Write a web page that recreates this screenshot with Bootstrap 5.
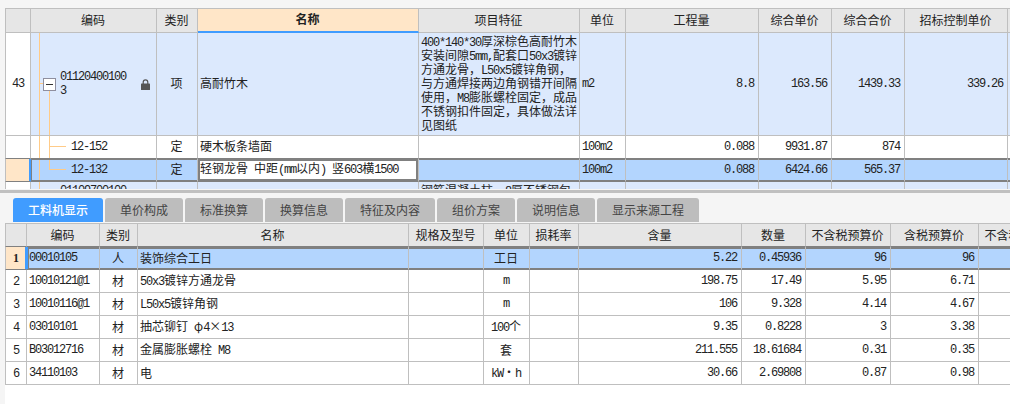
<!DOCTYPE html>
<html lang="zh">
<head>
<meta charset="utf-8">
<title>工料机显示</title>
<link href="https://cdn.jsdelivr.net/npm/bootstrap@5.3.0/dist/css/bootstrap.min.css" rel="stylesheet">
<style>
html,body{height:100%;overflow:hidden}
body{background:#f5f5f5;color:#222;font:12px/14px "Noto Sans CJK SC","Liberation Sans",sans-serif}
.lt{font-family:"Liberation Mono",monospace;letter-spacing:-1.2px;white-space:pre}
.top-pane{height:181px;margin:8px 0 1px 5px;overflow:hidden;background:#fff}
.bar{height:3px;background:#c0c0c0}
.tab-strip{height:30px;padding:5px 0 0 13px;gap:2px}
.tabx{height:24px;padding:0 15px;background:#bdbdbd;color:#444;border-radius:3px 3px 0 0;line-height:24px;white-space:nowrap}
.tabx.on{background:#409cff;color:#fff;font-weight:500}
.bottom-pane{height:181px;margin-left:5px;background:#fff;overflow:hidden}
table.sheet{table-layout:fixed;margin:0;border-collapse:separate;border-spacing:0;color:#222;--bs-table-bg:transparent}
table.sheet>*>tr>*{padding:0 3px 0 2px;border:0 solid #bfbfbf;border-width:0 1px 1px 0;vertical-align:middle;font-weight:400;font-size:12px;line-height:14px;white-space:nowrap;overflow:hidden;background-color:transparent;box-shadow:none}
table.sheet>*>tr>*:first-child{border-left-width:1px;padding:0;text-align:center}
table.sheet>thead>tr>*{background-color:#e6e6e6;text-align:center;border-top-width:1px}
table.sheet .ctr{text-align:center}
table.sheet>*>tr>td.num{text-align:right;padding-right:4px}
table.sheet>*>tr>th.hot{background-color:#ffe6c8;font-weight:700;border-bottom:2px solid #409cff;color:#222}
table.sheet-top>*>tr>*:not(.lt){padding-bottom:2px}
.sheet-top{width:1053px}
.sheet-low{width:1059px}
.t1{width:26px}.t2{width:126px}.t3{width:41px}.t4{width:221px}.t5{width:161px}.t6{width:46px}.t7{width:133px}.t8,.t9{width:73px}.t10{width:103px}.t11{width:50px}
.l1{width:22px}.l2{width:73px}.l3{width:38px}.l4{width:271px}.l5{width:75px}.l6{width:46px}.l7{width:49px}.l8{width:163px}.l9{width:64px}.l10{width:85px}.l11{width:88px}.l12{width:85px}
thead .rh{height:25px}
.rh-low{height:24px}
.r43>*{height:103px}
.r23>*{height:23px}
table.sheet>*>.blue>*{background-color:#dce9fd}
table.sheet>*>.pick>*{background-color:#b3d5fe;border-bottom-color:#808080;box-shadow:inset 0 1px #808080,inset 0 -1px #808080}
table.sheet>*>.pre>*{border-bottom-color:#808080}
table.sheet>*>.pick2>*{background-color:#b3d5fe;border-bottom-color:#808080;box-shadow:inset 0 2px #808080,inset 0 -1px #808080}
table.sheet>thead>.pre2>*{border-bottom-color:#808080}
table.sheet>*>tr>td.idx{background-color:#ffe6c8;border-right-color:#409cff;box-shadow:inset -1px 0 #409cff}
table.sheet>*>tr>td.idx0{background-color:#fff;box-shadow:none}
table.sheet>*>tr>td.idx+td{box-shadow:inset 1px 0 #808080,inset 0 1px #808080,inset 0 -1px #808080}
table.sheet>*>.pick2>td.idx+td{box-shadow:inset 1px 0 #409cff,inset 2px 0 #808080,inset 0 2px #808080,inset 0 -1px #808080;padding-left:2px}
table.sheet>*>.pick>td.edit{background-color:#fff;box-shadow:inset 0 0 0 2px #808080;padding-left:2px}
table.sheet>*>tr>td.tr-a{padding-left:29px;background-image:linear-gradient(#ffcb88,#ffcb88);background-size:1px 100%;background-repeat:no-repeat;background-position:8px 0}
table.sheet>*>tr>td.tr-b,table.sheet>*>tr>td.tr-c{padding-left:40px;text-align:left;background-image:linear-gradient(#ffcb88,#ffcb88),linear-gradient(#ffcb88,#ffcb88),linear-gradient(#ffcb88,#ffcb88);background-repeat:no-repeat}
table.sheet>*>tr>td.tr-b{background-size:1px 100%,1px 100%,16px 1px;background-position:8px 0,18px 0,19px 10px}
table.sheet>*>tr>td.tr-c{background-size:1px 100%,1px 11px,16px 1px;background-position:8px 0,18px 0,19px 10px}
table.sheet>*>tr>td.tr-a.root{padding:0 0 0 12px;background-image:linear-gradient(#ffcb88,#ffcb88),linear-gradient(#ffcb88,#ffcb88),linear-gradient(#ffcb88,#ffcb88);background-size:1px 100%,1px 46px,4px 1px;background-position:8px 0,18px 57px,8px 50px}
.fold{width:13px;height:13px;border:1px solid #8f8f9f;background:#fff;flex:none;margin-right:4px}
.fold-bar{display:block;width:7px;height:1px;background:#333;margin:5px auto 0}
.code-txt{width:78px;white-space:normal;word-break:break-all}
.lock{width:9px;height:11px;flex:none;margin-left:3px}
table.sheet>*>tr>td.feat{white-space:normal;vertical-align:top;padding-top:1px;padding-bottom:0}
.ln{display:block;height:14px;white-space:nowrap}
table.sheet>*>.cut>*{vertical-align:top;height:40px;padding-top:2px}
.serif-b{font:700 12px "Liberation Serif",serif;letter-spacing:0}
</style>
</head>
<body>
<div class="top-pane">
<table class="table sheet sheet-top">
<colgroup><col class="t1"><col class="t2"><col class="t3"><col class="t4"><col class="t5"><col class="t6"><col class="t7"><col class="t8"><col class="t9"><col class="t10"><col class="t11"></colgroup>
<thead><tr class="rh">
<th></th><th>编码</th><th>类别</th><th class="hot">名称</th><th>项目特征</th><th>单位</th><th>工程量</th><th>综合单价</th><th>综合合价</th><th>招标控制单价</th><th></th>
</tr></thead>
<tbody>
<tr class="r43 blue">
<td class="idx0"><span class="lt">43</span></td>
<td class="tr-a root"><div class="d-flex align-items-center"><span class="fold"><span class="fold-bar"></span></span><span class="code-txt lt">01120400100<br>3</span><svg class="lock" viewBox="0 0 9 11"><path d="M1.6 5V3.2a2.9 2.9 0 0 1 5.8 0V5H6.2V3.2a1.7 1.7 0 0 0-3.4 0V5z" fill="#555"/><rect y="4.6" width="9" height="6.4" rx=".6" fill="#555"/></svg></div></td>
<td class="ctr">项</td>
<td>高耐竹木</td>
<td class="feat"><span class="ln"><span class="lt">400*140*30</span>厚深棕色高耐竹木</span><span class="ln">安装间隙<span class="lt">5mm,</span>配套口<span class="lt">50x3</span>镀锌</span><span class="ln">方通龙骨，<span class="lt">L50x5</span>镀锌角钢，</span><span class="ln">与方通焊接两边角钢错开间隔</span><span class="ln">使用，<span class="lt">M8</span>膨胀螺栓固定，成品</span><span class="ln">不锈钢扣件固定，具体做法详</span><span class="ln">见图纸</span></td>
<td><span class="lt">m2</span></td>
<td class="num lt">8.8</td><td class="num lt">163.56</td><td class="num lt">1439.33</td><td class="num lt">339.26</td><td></td>
</tr>
<tr class="r23 pre">
<td class="idx0"></td>
<td class="tr-b lt">12-152</td>
<td class="ctr">定</td>
<td>硬木板条墙面</td>
<td></td>
<td><span class="lt">100m2</span></td>
<td class="num lt">0.088</td><td class="num lt">9931.87</td><td class="num lt">874</td><td></td><td></td>
</tr>
<tr class="r23 pick">
<td class="idx"></td>
<td class="tr-c lt">12-132</td>
<td class="ctr">定</td>
<td class="edit">轻钢龙骨<span class="lt"> </span>中距<span class="lt">(mm</span>以内<span class="lt">) </span>竖<span class="lt">603</span>横<span class="lt">1500</span></td>
<td></td>
<td><span class="lt">100m2</span></td>
<td class="num lt">0.088</td><td class="num lt">6424.66</td><td class="num lt">565.37</td><td></td><td></td>
</tr>
<tr class="cut blue">
<td class="idx0"></td>
<td class="tr-a lt">01109700100</td>
<td></td><td></td>
<td class="feat">钢筋混凝土柱，<span class="lt">8</span>厚不锈钢包</td>
<td></td><td></td><td></td><td></td><td></td><td></td>
</tr>
</tbody>
</table>
</div>
<div class="bar"></div>
<div class="d-flex tab-strip">
<div class="tabx on">工料机显示</div>
<div class="tabx">单价构成</div>
<div class="tabx">标准换算</div>
<div class="tabx">换算信息</div>
<div class="tabx">特征及内容</div>
<div class="tabx">组价方案</div>
<div class="tabx">说明信息</div>
<div class="tabx">显示来源工程</div>
</div>
<div class="bottom-pane">
<table class="table sheet sheet-low">
<colgroup><col class="l1"><col class="l2"><col class="l3"><col class="l4"><col class="l5"><col class="l6"><col class="l7"><col class="l8"><col class="l9"><col class="l10"><col class="l11"><col class="l12"></colgroup>
<thead><tr class="rh-low pre2">
<th></th><th>编码</th><th>类别</th><th>名称</th><th>规格及型号</th><th>单位</th><th>损耗率</th><th>含量</th><th>数量</th><th>不含税预算价</th><th>含税预算价</th><th>不含税市场价</th>
</tr></thead>
<tbody>
<tr class="r23 pick2"><td class="idx"><span class="serif-b">1</span></td><td class="lt">00010105</td><td class="ctr">人</td><td>装饰综合工日</td><td></td><td class="ctr">工日</td><td></td><td class="num lt">5.22</td><td class="num lt">0.45936</td><td class="num lt">96</td><td class="num lt">96</td><td></td></tr>
<tr class="r23"><td><span class="lt">2</span></td><td class="lt">10010121@1</td><td class="ctr">材</td><td><span class="lt">50x3</span>镀锌方通龙骨</td><td></td><td class="ctr lt">m</td><td></td><td class="num lt">198.75</td><td class="num lt">17.49</td><td class="num lt">5.95</td><td class="num lt">6.71</td><td></td></tr>
<tr class="r23"><td><span class="lt">3</span></td><td class="lt">10010116@1</td><td class="ctr">材</td><td><span class="lt">L50x5</span>镀锌角钢</td><td></td><td class="ctr lt">m</td><td></td><td class="num lt">106</td><td class="num lt">9.328</td><td class="num lt">4.14</td><td class="num lt">4.67</td><td></td></tr>
<tr class="r23"><td><span class="lt">4</span></td><td class="lt">03010101</td><td class="ctr">材</td><td>抽芯铆钉<span class="lt"> </span>φ<span class="lt">4</span>×<span class="lt">13</span></td><td></td><td class="ctr"><span class="lt">100</span>个</td><td></td><td class="num lt">9.35</td><td class="num lt">0.8228</td><td class="num lt">3</td><td class="num lt">3.38</td><td></td></tr>
<tr class="r23"><td><span class="lt">5</span></td><td class="lt">B03012716</td><td class="ctr">材</td><td>金属膨胀螺栓<span class="lt"> M8</span></td><td></td><td class="ctr">套</td><td></td><td class="num lt">211.555</td><td class="num lt">18.61684</td><td class="num lt">0.31</td><td class="num lt">0.35</td><td></td></tr>
<tr class="r23"><td><span class="lt">6</span></td><td class="lt">34110103</td><td class="ctr">材</td><td>电</td><td></td><td class="ctr"><span class="lt">kW</span>·<span class="lt">h</span></td><td></td><td class="num lt">30.66</td><td class="num lt">2.69808</td><td class="num lt">0.87</td><td class="num lt">0.98</td><td></td></tr>
</tbody>
</table>
</div>
</body>
</html>
